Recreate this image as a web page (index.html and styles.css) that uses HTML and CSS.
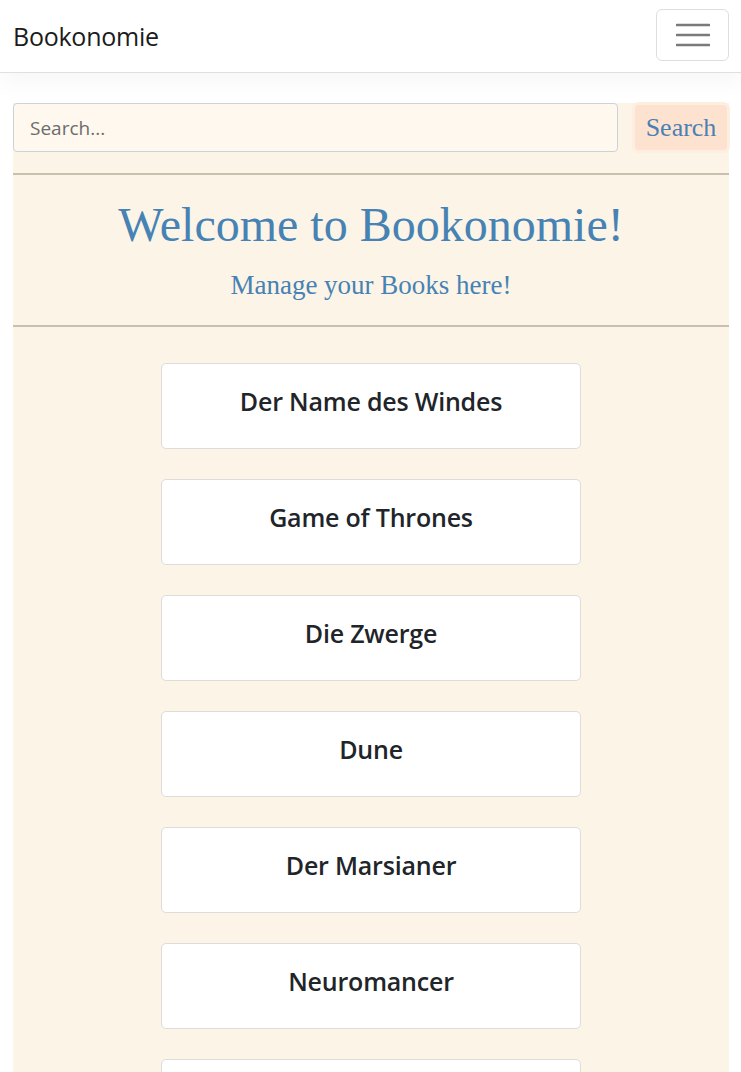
FILE: index.html
```html
<!DOCTYPE html>
<html lang="de">
<head>
<meta charset="utf-8">
<title>Bookonomie</title>
<link rel="stylesheet" href="styles.css">
</head>
<body>
<nav class="navbar">
  <span class="brand">Bookonomie</span>
  <button class="toggler" aria-label="Menu">
    <svg width="34" height="26" viewBox="0 0 34 26"><path d="M1 3h32M1 13h32M1 23h32" stroke="#7a7a7a" stroke-width="2.6" stroke-linecap="round"/></svg>
  </button>
</nav>
<main class="main">
  <form class="search-row">
    <input class="search-input" type="text" placeholder="Search...">
    <button class="search-btn" type="button">Search</button>
  </form>
  <hr class="rule">
  <header class="hero">
    <h1 class="hero-title">Welcome to Bookonomie!</h1>
    <p class="hero-sub">Manage your Books here!</p>
  </header>
  <hr class="rule">
  <section class="books">
    <div class="book">Der Name des Windes</div>
    <div class="book">Game of Thrones</div>
    <div class="book">Die Zwerge</div>
    <div class="book">Dune</div>
    <div class="book">Der Marsianer</div>
    <div class="book">Neuromancer</div>
    <div class="book">Snow Crash</div>
  </section>
</main>
</body>
</html>
```
FILE: styles.css
```css
* { box-sizing: border-box; }
html, body { margin: 0; padding: 0; }
body {
  background: #fff;
  font-family: "Open Sans", "Noto Sans", sans-serif;
  color: #212529;
}
.navbar {
  height: 73px;
  display: flex;
  align-items: center;
  justify-content: space-between;
  padding: 0 12px 0 13px;
  background: #fff;
  border-bottom: 1px solid #dfe0e2;
  box-shadow: 0 10px 22px rgba(0,0,0,0.035);
  position: relative;
}
.brand {
  font-size: 25px;
  color: #1b1b1b;
  letter-spacing: -0.25px;
}
.toggler {
  width: 73px;
  height: 52px;
  margin-top: -2px;
  border: 1px solid #dedede;
  border-radius: 6px;
  background: #fff;
  display: flex;
  align-items: center;
  justify-content: center;
  padding: 0;
}
.main {
  margin: 30px 12px 0 13px;
  background: #fcf4e6;
  min-height: 1000px;
}
.search-row {
  display: flex;
  align-items: center;
  gap: 17px;
  margin: 0;
  padding: 0 2px 0 0;
  background: #fcf4e6;
}
.search-input {
  width: 605px;
  height: 49px;
  border: 1px solid #ccd2da;
  border-radius: 4px;
  background: #fef8ee;
  padding: 0 16px;
  font-family: "Open Sans", "Noto Sans", sans-serif;
  font-size: 19px;
  color: #333;
  outline: none;
}
.search-input::placeholder { color: #6c6c6c; }
.search-btn {
  width: 92px;
  height: 45px;
  border: none;
  border-radius: 4px;
  background: #fde3cf;
  box-shadow: 0 0 0 3px #fdeedf;
  font-family: "Liberation Serif", serif;
  font-size: 26px;
  color: #4a80b5;
  padding: 0;
}
.rule {
  margin: 21px 0 0 0;
  border: 0;
  border-top: 2px solid #c9bfae;
  height: 0;
}
.hero {
  text-align: center;
  padding: 21px 0 23px;
}
.hero-title {
  margin: 0;
  font-family: "Liberation Serif", serif;
  font-weight: normal;
  font-size: 48px;
  line-height: 58px;
  color: #4682b4;
}
.hero-sub {
  margin: 14px 0 0;
  font-family: "Liberation Serif", serif;
  font-size: 27px;
  line-height: 34px;
  color: #4682b4;
}
.hero + .rule { margin-top: 0; }
.books {
  display: flex;
  flex-direction: column;
  align-items: center;
  gap: 30px;
  padding-top: 36px;
}
.book {
  width: 420px;
  height: 86px;
  background: #fff;
  border: 1px solid #dedcdb;
  border-radius: 5px;
  display: flex;
  align-items: center;
  justify-content: center;
  font-size: 25px;
  font-weight: 600;
  letter-spacing: -0.2px;
  color: #212529;
  padding-bottom: 10px;
}
```
